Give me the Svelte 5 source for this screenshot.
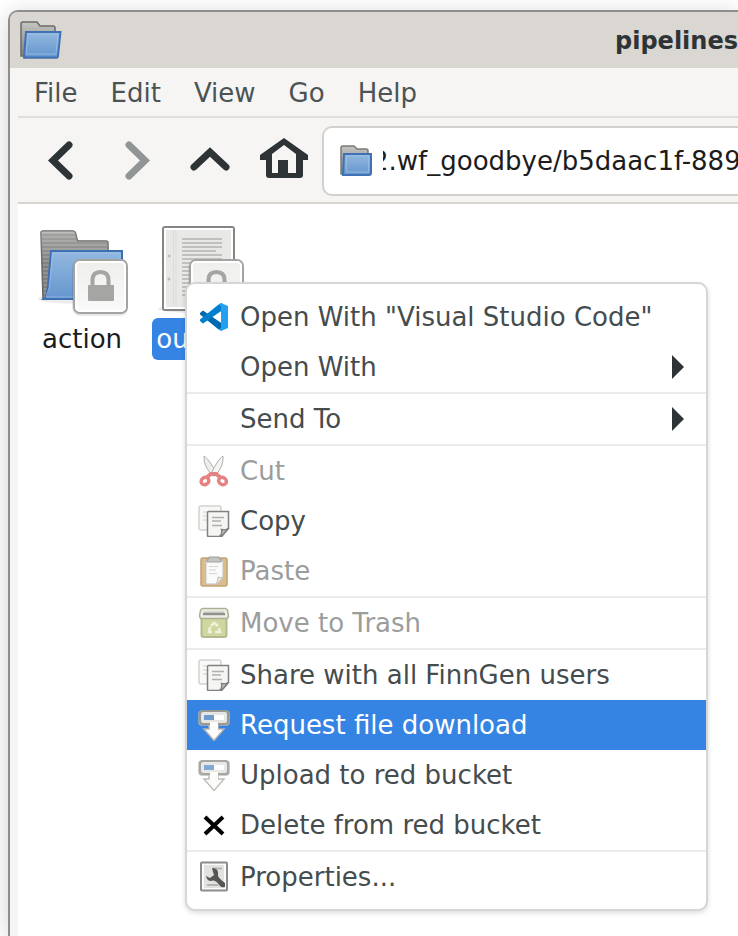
<script>
  const menus = ['File', 'Edit', 'View', 'Go', 'Help'];
  const groups = [
    [
      { label: 'Open With "Visual Studio Code"', icon: 'code' },
      { label: 'Open With', icon: '', sub: true }
    ],
    [{ label: 'Send To', icon: '', sub: true }],
    [
      { label: 'Cut', icon: 'cut', off: true },
      { label: 'Copy', icon: 'copy' },
      { label: 'Paste', icon: 'paste', off: true }
    ],
    [{ label: 'Move to Trash', icon: 'trash', off: true }],
    [
      { label: 'Share with all FinnGen users', icon: 'copy' },
      { label: 'Request file download', icon: 'save', active: true },
      { label: 'Upload to red bucket', icon: 'save', soft: true },
      { label: 'Delete from red bucket', icon: 'delete' }
    ],
    [{ label: 'Properties...', icon: 'props' }]
  ];
  let path = $state('2.wf_goodbye/b5daac1f-889');
</script>

{#snippet lock(x, y)}
  <g transform="translate({x} {y})">
    <rect x="-1" y="1" width="56" height="56" rx="8" fill="#000" opacity=".09" />
    <rect x="1" y="1" width="53" height="53" rx="6" fill="url(#badge)" stroke="#a3a3a1" stroke-width="2" />
    <rect x="3" y="3" width="49" height="49" rx="4" fill="none" stroke="#fff" stroke-width="2" />
    <path d="M19.500 27v-6q0-8 8-8t8 8v6" fill="none" stroke="#a5a5a3" stroke-width="4" />
    <rect x="15" y="26" width="26" height="16" rx="1" fill="#a5a5a3" />
  </g>
{/snippet}

{#snippet icon(name)}
  <svg class="icon" viewBox="0 0 32 32" aria-hidden="true">
    {#if name === 'code'}
      <path d="M2 12 5 9.500 24 22.500V29.500L20 28 2 13.500z" fill="#0069b0" />
      <path d="M2 20 5 22.500 24 9.500V2L20 4 2 18.500z" fill="#0080cc" />
      <path d="M23 2l7 3v22l-7 3-3-2q3 0 3-2V6q0-2-3-2z" fill="#22a0f2" />
    {:else if name === 'cut'}
      <path d="M6 1q5 3 13 18l-4 2Q5 11 6 1z" fill="#eeeeec" stroke="#b0b1ae" />
      <path d="M25 1q-5 3-12 18l4 2Q26 11 25 1z" fill="#f5f5f4" stroke="#b0b1ae" />
      <path d="M9 22l4-3h5l4 3" fill="none" stroke="#e48383" stroke-width="4" />
      <ellipse cx="7" cy="26" rx="4" ry="3.500" transform="rotate(-30 7 26)" fill="none" stroke="#e48383" stroke-width="3.500" />
      <ellipse cx="24.500" cy="26" rx="4" ry="3.500" transform="rotate(30 24.500 26)" fill="none" stroke="#e48383" stroke-width="3.500" />
    {:else if name === 'copy'}
      <rect x="1" y="1" width="22" height="24" rx="1" fill="#f8f8f7" stroke="#bdbebb" />
      <path d="M5 7h4M5 11h4M5 15h4" stroke="#d0d0ce" />
      <path d="M10.500 6.500h20v17l-7 8h-13q-1 0-1-1v-23q0-1 1-1z" fill="#f5f5f3" stroke="#80827e" stroke-width="1.500" />
      <path d="M14 12.500h12M14 16h9M14 20.500h10" stroke="#b0b1ae" stroke-width="1.500" />
      <path d="M30 23.500q-3 2-6.500 1 1 4-1.500 6.500h2z" fill="#c5c6c3" stroke="#80827e" stroke-width="1.500" />
    {:else if name === 'paste'}
      <rect x="3" y="3" width="26" height="28" rx="2" fill="#dabd8e" stroke="#c3a271" stroke-width="1.500" />
      <path d="M8 6h17v16l-6 7H8z" fill="#fafafa" stroke="#c3c3c0" />
      <path d="M25 22q-3 1-5 0 0 4-2 7" fill="#e2e2df" stroke="#c3c3c0" />
      <path d="M11 11.500h9M11 15h7M11 18.500h8" stroke="#d5d5d2" />
      <path d="M11 2h10v2h2v3H9V4h2z" fill="#c3c5c2" stroke="#a0a29f" />
    {:else if name === 'trash'}
      <path d="M3.500 10h25v18q0 2-2 2h-21q-2 0-2-2z" fill="#d0d69f" stroke="#b4b98f" stroke-width="2" />
      <path d="M5 1.500h22q2 0 2.500 2l1 5q0 3-2.500 3H4q-2.500 0-2.500-3l1-5q.5-2 2.500-2z" fill="#ecede5" stroke="#aeb096" stroke-width="1.500" />
      <path d="M6 4.500h20l1 4H5z" fill="#c4c5c0" />
      <path d="M5 7h22" stroke="#8f908c" stroke-width="2" />
      <g fill="none" stroke="#f0f3da" stroke-width="2.500">
        <path d="M13 19l3-3 4 3" />
        <path d="M21 21l1 4h-5" />
        <path d="M14 25h-3l1-5" />
      </g>
    {:else if name === 'save'}
      <path d="M4 2h24q3 0 3 3v8q0 3-3 3h-8v4h6L16 31.500 6 20h5v-4H4q-3 0-3-3V5q0-3 3-3z" fill="#fafaf8" stroke="#b3b4ae" stroke-width="1.500" />
      <rect x="2" y="2" width="28" height="13" rx="3" fill="#e5e5e2" stroke="#979893" stroke-width="2" />
      <rect x="6" y="6" width="10" height="5" fill="#6d9bd0" />
      <rect x="16" y="6" width="10" height="5" fill="#fff" />
      <path d="M12 13h8v8h4l-8 9-8-9h4z" fill="#fcfcfb" />
    {:else if name === 'delete'}
      <path d="M7 8l18 17M25 8L7 25" stroke="#000" stroke-width="4" />
    {:else if name === 'props'}
      <rect x="3" y="1.500" width="26" height="28" rx="1" fill="#fafaf9" stroke="#8b8d8a" stroke-width="2" />
      <rect x="6" y="4" width="20" height="23" fill="#e2e2e0" />
      <path d="M15 7.500h9M9 24h11" stroke="#b4b5b3" stroke-width="2" />
      <path d="M14 7q7 0 6 7 0 3 7 8v4q-3 1-5-1-5-7-9-5-4 0-5-5l4 2 4-3-1-3z" fill="#555753" />
    {/if}
  </svg>
{/snippet}

<div class="page">
  <div class="window">
    <header class="titlebar">
      <svg class="app" viewBox="0 0 42 42" aria-hidden="true">
        <path d="M1 4q0-2 2-2h14l3 4h13q2 0 2 2v28H1z" fill="url(#gray)" stroke="#6b6b69" stroke-width="1.500" />
        <path d="M3 37h34l1 2H4z" opacity=".25" />
        <path d="M6 12h34.500L38 36q0 1.500-2 1.500H4z" fill="url(#blue)" stroke="#3f72b4" stroke-width="2" />
        <path d="M8 14h30l-2 20H6z" fill="none" stroke="#a5c3e5" opacity=".7" />
      </svg>
      <h1>pipelines</h1>
    </header>

    <div class="frame">
      <nav class="menubar">
        {#each menus as m}<button>{m}</button>{/each}
      </nav>

      <div class="toolbar">
        <button class="tool" aria-label="Back">
          <svg viewBox="0 0 48 48"><path d="M32 8 16 23.500 32 39" /></svg>
        </button>
        <button class="tool" aria-label="Forward" disabled>
          <svg viewBox="0 0 48 48"><path d="M18 8l16 15.500L18 39" /></svg>
        </button>
        <button class="tool" aria-label="Up">
          <svg viewBox="0 0 48 48"><path d="M9 30l16-15 16 15" /></svg>
        </button>
        <button class="tool" aria-label="Home">
          <svg viewBox="0 0 48 48">
            <path class="solid" fill-rule="evenodd" d="M25 1 49 18v5h-5v15q0 3-3 3H10q-3 0-3-3V23H1v-5zM25 8 13 17v19h6V23h10v13h8V17z" />
          </svg>
        </button>
        <label class="entry">
          <svg viewBox="0 0 32 32" aria-hidden="true">
            <path d="M1 3q0-2 2-2h11l3 3h9q2 0 2 2v23H1z" fill="url(#gray)" stroke="#797977" stroke-width="1.500" />
            <path d="M4 9h27v19q0 2-2 2H3z" fill="url(#blue)" stroke="#3f72b4" stroke-width="2" />
            <path d="M6.500 11h22v16h-22z" fill="none" stroke="#a5c3e5" opacity=".7" />
          </svg>
          <input type="text" aria-label="Location" bind:value={path} />
        </label>
      </div>

      <main class="files">
        <div class="file">
          <svg viewBox="0 0 96 96" aria-hidden="true">
            <defs>
              <linearGradient id="gray" x1="0" y1="0" x2="0" y2="1">
                <stop offset="0" stop-color="#c4c4c2" />
                <stop offset="1" stop-color="#80807e" />
              </linearGradient>
              <linearGradient id="blue" x1="0" y1="0" x2="0" y2="1">
                <stop offset="0" stop-color="#92b8e0" />
                <stop offset=".5" stop-color="#7ca7d6" />
                <stop offset="1" stop-color="#6496cf" />
              </linearGradient>
              <linearGradient id="badge" x1="0" y1="0" x2="0" y2="1">
                <stop offset="0" stop-color="#eeeeed" />
                <stop offset="1" stop-color="#fafafa" />
              </linearGradient>
              <linearGradient id="shade" x1="0" y1="0" x2="0" y2="1">
                <stop offset="0" stop-color="#fff" stop-opacity=".3" />
                <stop offset=".5" stop-color="#fff" stop-opacity="0" />
              </linearGradient>
              <pattern id="lines" width="4" height="4" patternUnits="userSpaceOnUse">
                <rect width="4" height="4" fill="#929290" />
                <rect width="4" height="2" fill="#7e7e7c" />
              </pattern>
            </defs>
            <ellipse cx="44" cy="77" rx="40" ry="5" opacity=".07" />
            <path d="M7 11q0-2 2-2h30q2 0 2.500 2l2 8H72q2 0 2 2v56H9z" fill="url(#lines)" stroke="#666664" stroke-width="1.500" />
            <path d="M7 11q0-2 2-2h30q2 0 2.500 2l2 8H72q2 0 2 2v56H9z" fill="url(#shade)" />
            <path d="M8.500 12V10.500H40" fill="none" stroke="#c0c0be" />
            <path d="M17 29h71v48H10q3-2 4-14z" fill="url(#blue)" stroke="#3d70b2" stroke-width="2" />
            <path d="M18.500 31H86v44H12q4-8 4.500-20z" fill="none" stroke="#a9c6e8" opacity=".6" />
            {@render lock(39, 37)}
          </svg>
          <span>action</span>
        </div>
        <div class="file selected">
          <svg viewBox="0 0 96 96" aria-hidden="true">
            <ellipse cx="40" cy="87" rx="40" ry="4" opacity=".09" />
            <rect x="5" y="5" width="71" height="83" rx="2" fill="#e8e8e7" stroke="#858583" stroke-width="2" />
            <rect x="7" y="7" width="67" height="79" fill="none" stroke="#fff" stroke-width="2" />
            <path d="M15.500 8v77M18 8v77" stroke="#dcdcdb" />
            <circle cx="11" cy="34" r="1.500" fill="#bbb" />
            <circle cx="11" cy="57" r="1.500" fill="#bbb" />
            <path d="M24 17h40M24 21h40M24 25h40M24 29h34M24 33h40M24 37h40M24 41h36M24 45h40M24 49h40M24 53h40M24 57h40M24 61h40M24 65h40M24 69h40M24 73h40" stroke="#b3b3b1" stroke-width="1.500" />
            {@render lock(31, 37)}
          </svg>
          <span>outputs</span>
        </div>
      </main>
    </div>
  </div>

  <div class="menu" role="menu">
    {#each groups as items}
      <div class="group" role="group">
        {#each items as it}
          <button role="menuitem" class:active={it.active} class:soft={it.soft} disabled={it.off}>
            {@render icon(it.icon)}
            <span>{it.label}</span>
            {#if it.sub}
              <svg class="arrow" viewBox="0 0 12 24" aria-hidden="true"><path d="M0 0l12 12L0 24z" /></svg>
            {/if}
          </button>
        {/each}
      </div>
    {/each}
  </div>
</div>

<style>
  :global(body) {
    margin: 0;
    background: #fff;
  }
  .page {
    position: relative;
    box-sizing: border-box;
    min-height: 100vh;
    padding: 10px 0 0 8px;
    overflow: hidden;
    display: flex;
    font: 26px/30px "DejaVu Sans", sans-serif;
    color: #2e3436;
  }
  button,
  input {
    font: inherit;
    color: inherit;
    border: 0;
    margin: 0;
    padding: 0;
    background: none;
  }
  .window {
    flex: 1;
    min-width: 0;
    display: flex;
    flex-direction: column;
    border: solid #8f8e8c;
    border-width: 2px 0 0 2px;
    border-radius: 10px 0 0 0;
    background: #f6f5f4;
    box-shadow: 0 4px 24px rgba(0, 0, 0, 0.18);
  }
  .titlebar {
    box-sizing: border-box;
    display: flex;
    align-items: center;
    justify-content: space-between;
    height: 56px;
    padding: 2px 0 0 10px;
    background: #dad6d2;
    border-radius: 8px 0 0 0;
  }
  .app {
    width: 42px;
    height: 42px;
  }
  h1 {
    margin: 0;
    font-size: 24px;
    line-height: 30px;
    font-weight: bold;
  }
  .frame {
    flex: 1;
    margin-left: 8px;
    display: flex;
    flex-direction: column;
  }
  .menubar {
    display: flex;
    gap: 1px;
    height: 48px;
    border-bottom: 2px solid #e1dfdd;
  }
  .menubar button {
    padding: 2px 16px 0;
    color: #4b5355;
  }
  .toolbar {
    display: flex;
    padding: 8px 0 6px 6px;
    border-bottom: 2px solid #d8d4d0;
  }
  .tool {
    flex: none;
    width: 74px;
    height: 70px;
    display: flex;
    align-items: center;
    justify-content: center;
  }
  .tool svg {
    width: 48px;
    height: 48px;
    overflow: visible;
    fill: none;
    stroke: #2e3436;
    stroke-width: 7;
  }
  .tool path {
    stroke-linecap: round;
  }
  .tool .solid {
    fill: #2e3436;
    stroke: none;
  }
  .tool:disabled svg {
    stroke: #929595;
  }
  .entry {
    flex: 1;
    min-width: 0;
    display: flex;
    align-items: center;
    gap: 11px;
    margin-left: 2px;
    padding-left: 16px;
    border: solid #d5d0cc;
    border-width: 2px 0 2px 2px;
    border-radius: 10px 0 0 10px;
    background: #fff;
  }
  .entry svg {
    flex: none;
    width: 32px;
    height: 32px;
  }
  .entry input {
    flex: 1;
    min-width: 0;
    height: 40px;
    text-indent: -11px;
    color: #1c1c1c;
    outline: none;
  }
  .files {
    flex: 1;
    display: flex;
    align-items: flex-start;
    gap: 16px;
    padding: 18px 10px;
    background: #fff;
    color: #1c1c1c;
  }
  .file {
    width: 108px;
    display: flex;
    flex-direction: column;
    align-items: center;
  }
  .file svg {
    width: 96px;
    height: 96px;
  }
  .file span {
    padding: 0 4px;
    line-height: 42px;
    border-radius: 6px;
  }
  .selected span {
    background: #3584e4;
    color: #fff;
  }
  .menu {
    position: absolute;
    left: 185px;
    top: 282px;
    width: 519px;
    padding: 8px 0 7px;
    border: 2px solid #d6d6d6;
    border-radius: 10px;
    background: #fff;
    box-shadow: 0 2px 5px rgba(0, 0, 0, 0.14);
  }
  .group + .group {
    border-top: 2px solid #ebebeb;
  }
  .menu button {
    display: flex;
    align-items: center;
    gap: 10px;
    width: 100%;
    height: 50px;
    padding: 0 22px 0 11px;
    color: #454c4e;
    text-align: left;
  }
  .menu button:disabled {
    color: #9a9d9c;
  }
  .menu .active {
    background: #3584e4;
    color: #fff;
  }
  .soft .icon {
    opacity: 0.85;
  }
  .icon {
    flex: none;
    width: 32px;
    height: 32px;
  }
  .menu span {
    flex: 1;
  }
  .arrow {
    width: 12px;
    height: 24px;
    fill: #2e3436;
  }
</style>
